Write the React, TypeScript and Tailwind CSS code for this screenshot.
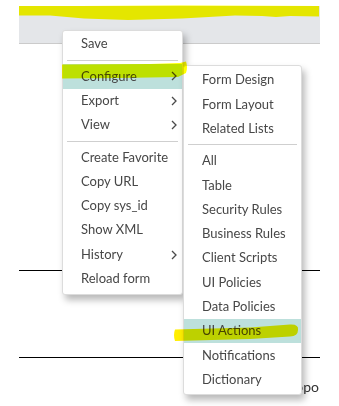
import React from "react";

type Item = { label: string; sub?: boolean; active?: boolean } | "sep";

const mainMenu: Item[] = [
  { label: "Save" },
  "sep",
  { label: "Configure", sub: true, active: true },
  { label: "Export", sub: true },
  { label: "View", sub: true },
  "sep",
  { label: "Create Favorite" },
  { label: "Copy URL" },
  { label: "Copy sys_id" },
  { label: "Show XML" },
  { label: "History", sub: true },
  { label: "Reload form" },
];

const configureMenu: Item[] = [
  { label: "Form Design" },
  { label: "Form Layout" },
  { label: "Related Lists" },
  "sep",
  { label: "All" },
  { label: "Table" },
  { label: "Security Rules" },
  { label: "Business Rules" },
  { label: "Client Scripts" },
  { label: "UI Policies" },
  { label: "Data Policies" },
  { label: "UI Actions", active: true },
  { label: "Notifications" },
  { label: "Dictionary" },
];

function Chevron() {
  return (
    <svg width="6" height="10" viewBox="0 0 6 10" className="shrink-0">
      <path d="M1 1 L5 5 L1 9" fill="none" stroke="#4a4a4a" strokeWidth="1.3" />
    </svg>
  );
}

function Menu({ items, className }: { items: Item[]; className: string }) {
  return (
    <div
      className={`absolute flex flex-col rounded-[3px] border border-[#dcdcdc] bg-white shadow-[3px_5px_7px_rgba(0,0,0,0.28)] ${className}`}
    >
      {items.map((it, i) =>
        it === "sep" ? (
          <div key={i} className="mx-[4px] flex h-[8px] items-center">
            <div className="h-px w-full bg-[#cfcfcf]" />
          </div>
        ) : (
          <div
            key={i}
            className={`flex h-[24.3px] items-center justify-between pl-[18px] pr-[5px] ${it.active ? "bg-[#bde0dc]" : ""}`}
          >
            <span>{it.label}</span>
            {it.sub && <Chevron />}
          </div>
        )
      )}
    </div>
  );
}

export default function App() {
  return (
    <div
      className="relative h-[406px] w-[339px] overflow-hidden bg-white text-[13px] text-[#474747]"
      style={{ fontFamily: "Lato, 'Open Sans', sans-serif" }}
    >
      <div className="mx-[19px] mt-[6px] h-[38px] border-b border-[#cbcbcb] bg-[#e4e6e9]" />

      <div className="mx-[19px] mt-[226px] h-px bg-black" />
      <div className="mx-[19px] mt-[86px] h-px bg-black" />
      <div className="mt-[18px] flex justify-end pr-[20px] text-[14px] text-[#333]">Suppo</div>

      <Menu items={mainMenu} className="left-[62px] top-[30px] w-[121px] pb-[3px] pt-px" />
      <Menu items={configureMenu} className="left-[183px] top-[65px] w-[119px] py-[2px]" />

      {/* highlighter marks */}
      <svg
        className="pointer-events-none absolute left-0 top-0 mix-blend-multiply"
        width="339"
        height="406"
        viewBox="0 0 339 406"
      >
        <path
          d="M19 6 L80 6 L180 5.5 L319 6 L319 16.5 L290 16 L276 17 L262 16 L235 15.5 L182 18.5 L128 20 L84 18.5 L50 15.5 L19 15.5 Z"
          fill="#ffff00"
        />
        <path
          d="M62 64.5 L150 64 L180 63 L186 61.5 Q188 67 186 73 L178 77 L120 78 L62 78.5 Z"
          fill="#ffff00"
        />
        <path
          d="M175 329.5 L250 327.5 L290 324.5 Q299 324 298 330 Q298 336 290 336.5 L250 339 L175 341 Q173 335 175 329.5 Z"
          fill="#ffee00"
        />
      </svg>
    </div>
  );
}
